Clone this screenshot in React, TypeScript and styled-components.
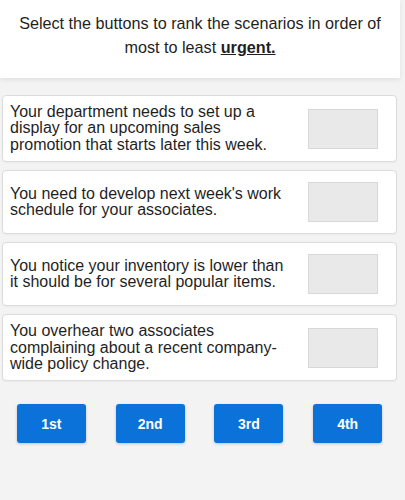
import React from "react";
import styled, { createGlobalStyle } from "styled-components";

const GlobalStyle = createGlobalStyle`
  html, body {
    margin: 0;
    padding: 0;
    background-color: #f3f3f4;
    font-family: "Liberation Sans", Arial, sans-serif;
    color: #1f1f1f;
  }
`;

const SPage = styled.div`
  width: 400px;
  min-height: 500px;
`;

const SHeader = styled.div`
  background-color: #ffffff;
  height: 78px;
  box-sizing: border-box;
  padding-top: 11px;
  text-align: center;
  font-size: 16.2px;
  line-height: 24px;
  box-shadow: 0 2px 5px rgba(0, 0, 0, 0.08);
`;

const SUrgent = styled.span`
  font-weight: bold;
  text-decoration: underline;
`;

const SList = styled.div`
  display: flex;
  flex-direction: column;
  gap: 8px;
  margin: 17px 3px 0 2px;
`;

const SCard = styled.div`
  display: flex;
  align-items: center;
  justify-content: space-between;
  background-color: #ffffff;
  border: 1px solid #dcdcdc;
  border-radius: 4px;
  padding: 8px 18px 8px 7px;
  box-shadow: 0 1px 2px rgba(0, 0, 0, 0.04);
`;

const SCardText = styled.div`
  font-size: 16px;
  line-height: 16.4px;
  width: 284px;
`;

const SSlot = styled.div`
  width: 70px;
  height: 40px;
  flex-shrink: 0;
  box-sizing: border-box;
  margin: 3px 0;
  background-color: #e9e9e9;
  border: 1px solid #d8d8d8;
`;

const SButtonRow = styled.div`
  display: flex;
  justify-content: space-around;
  margin: 23px 3px 0 2px;
`;

const SRankButton = styled.button`
  width: 69px;
  height: 39px;
  border: none;
  border-radius: 3px;
  background-color: #0b72da;
  color: #ffffff;
  font-family: "Liberation Sans", Arial, sans-serif;
  font-weight: bold;
  font-size: 14px;
  box-shadow: 0 1px 3px rgba(0, 0, 0, 0.2);
  cursor: pointer;
`;

const scenarios = [
  "Your department needs to set up a display for an upcoming sales promotion that starts later this week.",
  "You need to develop next week's work schedule for your associates.",
  "You notice your inventory is lower than it should be for several popular items.",
  "You overhear two associates complaining about a recent company-wide policy change.",
];

const ranks = ["1st", "2nd", "3rd", "4th"];

const App: React.FC = () => {
  return (
    <SPage>
      <GlobalStyle />
      <SHeader>
        Select the buttons to rank the scenarios in order of
        <br />
        most to least <SUrgent>urgent.</SUrgent>
      </SHeader>
      <SList>
        {scenarios.map((text) => (
          <SCard key={text}>
            <SCardText>{text}</SCardText>
            <SSlot />
          </SCard>
        ))}
      </SList>
      <SButtonRow>
        {ranks.map((r) => (
          <SRankButton key={r}>{r}</SRankButton>
        ))}
      </SButtonRow>
    </SPage>
  );
};

export default App;
